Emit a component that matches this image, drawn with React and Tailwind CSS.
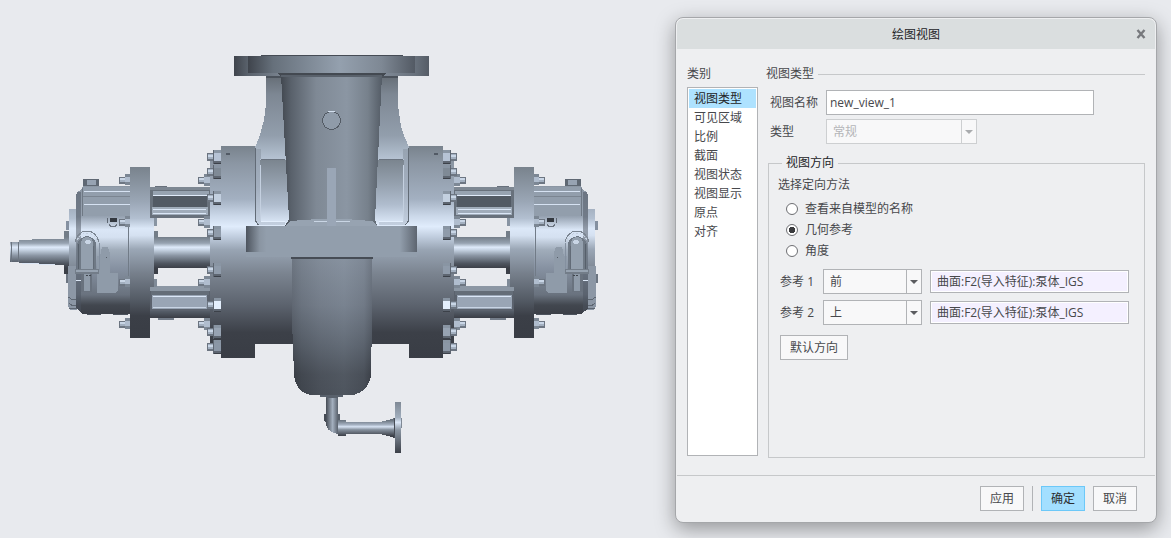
import { useState } from 'react'
import { clsx } from 'clsx'

const categories = ['视图类型', '可见区域', '比例', '截面', '视图状态', '视图显示', '原点', '对齐']
const methods = ['查看来自模型的名称', '几何参考', '角度']

const nuts = [
  { y: 157, fill: '#b6c3d5' },
  { y: 172, fill: '#7f8a96' },
  { y: 198, fill: '#c3d0e0' },
  { y: 233, fill: '#8f9baa' },
  { y: 270, fill: '#8f9baa' },
  { y: 305, fill: '#e4effd' },
  { y: 332, fill: '#97a3b2' },
  { y: 347, fill: '#8b97a6' },
]
const studs = [180, 222, 282, 324]

function Gradient({ id, y1, y2, x1 = 0, x2 = 0, stops }) {
  return (
    <linearGradient id={id} gradientUnits="userSpaceOnUse" x1={x1} x2={x2} y1={y1} y2={y2}>
      {stops.map(([offset, color]) => (
        <stop key={offset} offset={offset} stopColor={color} />
      ))}
    </linearGradient>
  )
}

function Rod({ x, y, width, height = 8 }) {
  return (
    <g>
      <rect x={x} y={y - height / 2} width={width} height={height} fill="#6d7682" />
      <rect x={x} y={y - height / 2 + 1} width={width} height={height - 3} fill="#a3b0c0" />
      <rect x={x} y={y - 2} width={width} height="2" fill="#c9d6e6" />
      <rect x={x} y={y - height / 2} width="1" height={height} fill="#6b7480" />
    </g>
  )
}

function HalfAssembly() {
  return (
    <g>
      {/* arms between the bearing housing and the casing */}
      <rect x="150" y="187" width="60" height="31" fill="#68717c" />
      <rect x="150" y="187" width="60" height="3" fill="#7d8792" />
      <rect x="153" y="191" width="56" height="4" fill="#97a3b1" />
      <rect x="153" y="195" width="54" height="1" fill="#e0ebfa" />
      <rect x="153" y="196" width="54" height="11" fill="#525a64" />
      <rect x="152" y="207" width="56" height="8" fill="#a0acba" />
      <rect x="153" y="209" width="53" height="1" fill="#dbe7f7" />
      <rect x="153" y="213" width="53" height="1" fill="#dbe7f7" />
      <rect x="155" y="186" width="12" height="1" fill="#68717c" />
      <rect x="150" y="286" width="60" height="32" fill="#5b626d" />
      <rect x="150" y="286" width="60" height="5" fill="#8c97a4" />
      <rect x="151" y="291" width="58" height="4" fill="#646d78" />
      <rect x="152" y="295" width="55" height="14" fill="#99a5b5" />
      <rect x="153" y="296" width="53" height="1" fill="#dbe7f7" />
      <rect x="153" y="307" width="53" height="1" fill="#c8d4e4" />
      <rect x="150" y="311" width="60" height="7" fill="url(#arm-foot)" />
      <rect x="158" y="318" width="16" height="2" fill="#757e8a" />
      <rect x="156" y="237" width="54" height="31" fill="url(#shaft)" />
      <rect x="150" y="218" width="4" height="69" fill="url(#thin)" />
      <rect x="154" y="231" width="4" height="43" fill="url(#shaft)" />
      <rect x="154" y="218" width="3" height="8" fill="#8894a2" />
      <rect x="154" y="279" width="3" height="8" fill="#7f8a97" />

      {/* stud ring */}
      {studs.map((y) => (
        <g key={y}>
          <Rod x={198} y={y} width={7} height={7} />
          <rect x="204" y={y - 6} width="7" height="12" fill="#7d8895" />
          <rect x="204" y={y - 3} width="6" height="6" fill="#b0bdce" />
        </g>
      ))}
      <rect x="210" y="161" width="11" height="187" fill="url(#casing)" />
      {nuts.map(({ y, fill }) => (
        <g key={y}>
          <Rod x={207} y={y} width={7} height={8} />
          <rect x="213" y={y - 7} width="8" height="14" fill="#5e6671" />
          <rect x="214" y={y - 7} width="7" height="3" fill="#8995a3" />
          <rect x="214" y={y - 4} width="7" height="8" fill={fill} />
          <rect x="214" y={y + 6} width="7" height="1" fill="#3c4149" />
        </g>
      ))}

      {/* bearing housing */}
      <rect x="83" y="179" width="16" height="7" fill="#5f6873" />
      <rect x="87" y="180" width="9" height="5" fill="#97a3b2" />
      <rect x="87" y="313" width="14" height="2" fill="#4c535d" />
      <rect x="113" y="313" width="15" height="2" fill="#4c535d" />
      <rect x="66" y="221" width="4" height="9" fill="#8490a0" />
      <rect x="66" y="274" width="4" height="9" fill="#6c7581" />
      <rect x="69" y="209" width="8" height="60" fill="url(#thin)" />
      <path d="M68 266h9v44h-7l-2-4z" fill="#8c97a5" />
      <path d="M68.5 297l3 2.5h6M69 303l3 2.5h5M69 308.5h8" fill="none" stroke="#5d6671" />
      <path d="M130 186H83l-2 4-4 2-1 4v112l3 3 4 3h47z" fill="url(#housing)" />
      <path d="M77 192h4v121l-5-6V196z" fill="#4c545f" opacity="0.5" />
      <rect x="83" y="187" width="47" height="29" fill="#929eac" />
      <path d="M84 191.5h46M84 204.5h46" stroke="#d6e2f2" />
      <path d="M83 196.5h47" stroke="#7b8591" />
      <path d="M82.5 188v28" stroke="#6f7985" />
      <path d="M97 293v-37h3l2-9h6l2 6v20h8v17l-2 3z" fill="#8f9ba9" />
      <path d="M128.5 216v72" stroke="#717b87" />
      <path d="M109 224q1 3 4 3t4-3" fill="none" stroke="#6b7480" />
      <path d="M107.5 218v5" stroke="#5e6772" />
      <path d="M110 218h7v4h-7z" fill="#343940" />
      <rect x="106" y="257" width="1" height="1" fill="#555d67" />

      {/* oiler */}
      <path d="M75 242q3-11 12-11 9 0 12 11" fill="none" stroke="#7b8591" />
      <path d="M99 243v27" stroke="#8490a0" />
      <path d="M77 240q4-7 10-7t10 7" fill="none" stroke="#c4d0df" strokeDasharray="2 2" />
      <path d="M77 269V245q1-7 10-9 9 2 9 9v24z" fill="#6f7985" />
      <path d="M81 269V243q1-6 6-6t6 6v26z" fill="#94a0ae" />
      <path d="M78.5 244v25" stroke="#57606b" />
      <path d="M93.5 246v23" stroke="#626b77" />
      <ellipse cx="88" cy="242" rx="3" ry="2" fill="#c9d5e5" />
      <rect x="75" y="269" width="24" height="5" fill="#737d89" />
      <rect x="76" y="270" width="22" height="2" fill="#97a3b1" />
      <rect x="81" y="274" width="11" height="18" fill="#69727e" />
      <rect x="84" y="274" width="6" height="17" fill="#8f9ba9" />
      <path d="M86 275.5h5" stroke="#40464e" strokeDasharray="2 1" />
      <path d="M76 280.5h5" stroke="#dbe6f5" />

      {/* thin flange */}
      {studs.map((y) => (
        <g key={y}>
          <Rod x={119} y={y} width={7} height={7} />
          <rect x="125" y={y - 6} width="5" height="11" fill="#7c8794" />
          <rect x="125" y={y - 3} width="5" height="5" fill="#b0bdce" />
        </g>
      ))}
      <rect x="130" y="167" width="20" height="171" fill="url(#thin)" />

      {/* casing flange */}
      <rect x="221" y="146" width="34" height="212" fill="url(#casing)" />
      <rect x="226" y="153" width="4" height="2" fill="#525a65" />
    </g>
  )
}

function PumpModel() {
  return (
    <svg viewBox="0 0 675 538" className="block h-auto w-full" shapeRendering="crispEdges" role="img" aria-label="泵体">
      <defs>
        <Gradient
          id="casing"
          y1={146}
          y2={358}
          stops={[
            [0, '#79838d'],
            [0.08, '#8b96a3'],
            [0.25, '#a3b0c1'],
            [0.33, '#cbd8e9'],
            [0.38, '#e0ecfc'],
            [0.43, '#bfccdd'],
            [0.49, '#98a4b3'],
            [0.6, '#7b8490'],
            [0.75, '#5c636e'],
            [0.88, '#3c4048'],
            [1, '#393d45'],
          ]}
        />
        <Gradient
          id="thin"
          y1={167}
          y2={338}
          stops={[
            [0, '#79838d'],
            [0.2, '#9aa6b5'],
            [0.3, '#b2bfd0'],
            [0.36, '#dce8f8'],
            [0.4, '#d5e1f1'],
            [0.48, '#9ba7b6'],
            [0.62, '#77808c'],
            [0.78, '#535a64'],
            [0.87, '#3b3f47'],
            [1, '#393d45'],
          ]}
        />
        <Gradient
          id="housing"
          y1={186}
          y2={314}
          stops={[
            [0, '#8b96a3'],
            [0.24, '#97a3b2'],
            [0.34, '#dae6f6'],
            [0.4, '#d5e1f1'],
            [0.5, '#a0acba'],
            [0.65, '#8590a0'],
            [0.85, '#69727e'],
            [0.93, '#42474f'],
            [1, '#3b3f47'],
          ]}
        />
        <Gradient
          id="shaft"
          y1={237}
          y2={268}
          stops={[
            [0, '#737d88'],
            [0.2, '#97a3b1'],
            [0.33, '#dfebfb'],
            [0.42, '#c5d2e2'],
            [0.6, '#8a95a3'],
            [0.85, '#4f5660'],
            [1, '#3b3f47'],
          ]}
        />
        <Gradient id="arm-foot" y1={311} y2={318} stops={[[0, '#565e69'], [1, '#3a3e46']]} />
        <Gradient
          id="top"
          x1={234}
          x2={429}
          y1={0}
          y2={0}
          stops={[
            [0, '#3f444c'],
            [0.07, '#59616b'],
            [0.25, '#7b8591'],
            [0.5, '#95a1af'],
            [0.75, '#828c99'],
            [0.93, '#68717c'],
            [1, '#555c66'],
          ]}
        />
        <Gradient
          id="top-front"
          x1={248}
          x2={415}
          y1={0}
          y2={0}
          stops={[
            [0, '#3f444c'],
            [0.15, '#66707b'],
            [0.55, '#94a0ae'],
            [0.8, '#7e8894'],
            [1, '#535a64'],
          ]}
        />
        <Gradient
          id="neck"
          x1={281}
          x2={382}
          y1={0}
          y2={0}
          stops={[
            [0, '#424850'],
            [0.1, '#59616b'],
            [0.35, '#7f8995'],
            [0.65, '#8b96a3'],
            [0.86, '#77818c'],
            [1, '#545c66'],
          ]}
        />
        <Gradient
          id="shoulder"
          y1={78}
          y2={160}
          stops={[
            [0, '#687079'],
            [0.2, '#7d8793'],
            [0.7, '#929eac'],
            [1, '#b7c4d4'],
          ]}
        />
        <Gradient
          id="recess"
          y1={160}
          y2={224}
          stops={[
            [0, '#7b858f'],
            [0.4, '#97a3b1'],
            [0.7, '#b0bdce'],
            [1, '#dde9f9'],
          ]}
        />
        <Gradient
          id="lip"
          y1={149}
          y2={225}
          stops={[
            [0, '#97a3b1'],
            [0.5, '#a3afbf'],
            [1, '#c3cfdf'],
          ]}
        />
        <Gradient
          id="block"
          x1={246}
          x2={417}
          y1={0}
          y2={0}
          stops={[
            [0, '#4d545e'],
            [0.08, '#8a95a2'],
            [0.12, '#929eac'],
            [0.9, '#929eac'],
            [1, '#5d6570'],
          ]}
        />
        <Gradient
          id="bowl"
          x1={292}
          x2={372}
          y1={0}
          y2={0}
          stops={[
            [0, '#3f444c'],
            [0.12, '#59616b'],
            [0.35, '#717a86'],
            [0.65, '#7f8a97'],
            [0.9, '#6a737f'],
            [1, '#454b54'],
          ]}
        />
        <Gradient
          id="bowl-shade"
          y1={257}
          y2={395}
          stops={[
            [0, '#8d98a6'],
            [0.35, '#757e8b'],
            [0.65, '#4f5660'],
            [0.85, '#33373e'],
            [1, '#2e3239'],
          ]}
        />
        <Gradient
          id="pipe"
          x1={326}
          x2={338}
          y1={0}
          y2={0}
          stops={[
            [0, '#454b54'],
            [0.55, '#a4b0bf'],
            [1, '#59616c'],
          ]}
        />
        <Gradient
          id="drain"
          y1={420}
          y2={436}
          stops={[
            [0, '#66707b'],
            [0.3, '#a6b2c2'],
            [0.42, '#d6e2f2'],
            [0.6, '#87929f'],
            [1, '#3b3f47'],
          ]}
        />
        <Gradient
          id="drain-flange"
          y1={402}
          y2={453}
          stops={[
            [0, '#7f8995'],
            [0.3, '#a0adbc'],
            [0.4, '#dbe7f7'],
            [0.55, '#8a95a2'],
            [1, '#3b3f47'],
          ]}
        />
      </defs>

      {/* input shaft */}
      <path d="M10 242h9v-2l26-1h19v26l-45-2v-1h-9z" fill="url(#shaft)" />
      <path d="M11.5 242v20M18.5 242v20" stroke="#6b7480" />
      <path d="M22 263.5l33 1" stroke="#dbe6f5" />
      <rect x="64" y="231" width="5" height="43" fill="url(#shaft)" />

      <HalfAssembly />
      <g transform="translate(664 0) scale(-1 1)">
        <HalfAssembly />
      </g>

      {/* casing body */}
      <rect x="255" y="147" width="154" height="197" fill="url(#casing)" />
      <rect x="255" y="130" width="154" height="17" fill="#e8eaee" />
      <path d="M266 76h132v30l3 20 4 12 4 9v13H255v-13l4-9 5-18 2-16z" fill="url(#shoulder)" />
      <path d="M266 77h132" stroke="#4b525b" strokeWidth="2" />
      <rect x="255" y="160" width="154" height="64" fill="url(#recess)" />
      <path d="M256 149h5v10h-1v62h25v4h-26l-3-4zM408 149h-5v10h1v62h-25v4h26l3-4z" fill="url(#lip)" />
      <path d="M255.5 148v73l3 4M408.5 148v73l-3 4" fill="none" stroke="#626b76" />
      <path d="M260.5 165v56M403.5 165v56" stroke="#c4d0e0" />
      <path d="M261 159.5h24M379 159.5h24" stroke="#6b7480" />
      <path d="M261 221.5h24M379 221.5h24" stroke="#e4effd" />

      {/* discharge nozzle */}
      <rect x="261" y="55" width="142" height="2" fill="#464c55" />
      <rect x="234" y="56" width="195" height="20" fill="url(#top)" />
      <rect x="248" y="56" width="167" height="17" fill="url(#top-front)" />
      <path d="M277 73h109l-3 3H280z" fill="#434951" />
      <path d="M281 75h101l-7 144 2 7h-92l4-7z" fill="url(#neck)" />
      <path d="M281 76h101" stroke="#59616b" strokeWidth="2" />
      <path d="M285 226l5-5q42-4 82 0l5 5z" fill="#97a3b1" />
      <path d="M314 221.5h36" stroke="#c9d5e4" />
      <circle cx="331.5" cy="120.5" r="9" fill="#8f9ba9" stroke="#535b65" />
      <path d="M328 111.5h7" fill="none" stroke="#d3dfee" />
      <rect x="327" y="168" width="9" height="58" fill="#9aa6b6" />

      {/* volute */}
      <path d="M292 257h80v63l-1 55q-2 16-18 20h-41q-16-2-18-20l-2-55z" fill="url(#bowl-shade)" />
      <path
        d="M292 257h80v63l-1 55q-2 16-18 20h-41q-16-2-18-20l-2-55z"
        fill="url(#bowl)"
        opacity="0.4"
      />
      <path d="M291 258h82" stroke="#464c55" strokeWidth="2" />
      <rect x="246" y="226" width="171" height="31" fill="#929eac" />
      <rect x="246" y="226" width="171" height="26" fill="url(#block)" />

      {/* drain line */}
      <path d="M320 395h23v2h-5v2h-12v-2h-6z" fill="#59616c" />
      <rect x="326" y="398" width="12" height="17" fill="url(#pipe)" />
      <path d="M325 420h13v14h-1q-11-2-12-14z" fill="url(#pipe)" />
      <rect x="324" y="414" width="16" height="7" fill="url(#pipe)" />
      <rect x="346" y="422" width="35" height="12" fill="url(#drain)" />
      <rect x="338" y="420" width="8" height="16" fill="url(#drain)" />
      <path d="M380 422l8-2 7-2v20l-7-2-8-2z" fill="url(#drain)" />
      <path d="M394.5 418v20" stroke="#464c55" />
      <rect x="395" y="402" width="6" height="51" fill="url(#drain-flange)" />
      <rect x="401" y="418" width="1" height="10" fill="#7f8995" />
    </svg>
  )
}

function Combo({ id, label, value, options, disabled, className }) {
  return (
    <div className={clsx('relative', className)}>
      <select
        id={id}
        aria-label={label}
        defaultValue={value}
        disabled={disabled}
        className={clsx(
          'block h-[25px] w-full appearance-none rounded-none border bg-[#f8f8f9] pl-[6px] pr-5 outline-none',
          disabled ? 'border-[#cdcfd1] text-[#b4b5b8] opacity-100' : 'border-[#b1b3b6] text-[#47484c]',
        )}
      >
        {options.map((option) => (
          <option key={option}>{option}</option>
        ))}
      </select>
      <span
        className={clsx(
          'pointer-events-none absolute inset-y-0 right-0 flex w-4 items-center justify-center border-l pr-px',
          disabled ? 'border-[#cdcfd1] text-[#a9abae]' : 'border-[#b1b3b6] text-[#5b5c60]',
        )}
      >
        <svg viewBox="0 0 8 4" className="h-1 w-2" fill="currentColor">
          <path d="M0 0h8L4 4z" />
        </svg>
      </span>
    </div>
  )
}

function ReferenceRow({ index, direction }) {
  const id = `reference-${index}`

  return (
    <div className="flex items-center">
      <label htmlFor={id} className="w-[43px]">
        参考 {index}
      </label>
      <Combo id={id} value={direction} options={['前', '后', '上', '下', '左', '右']} className="w-[99px]" />
      <input
        type="text"
        readOnly
        aria-label={`参考 ${index} 几何`}
        defaultValue="曲面:F2(导入特征):泵体_IGS"
        className="ml-2 h-[23px] min-w-0 flex-1 border border-[#b1b3b6] bg-[#f4f0ff] px-[6px] pb-[2px] shadow-[inset_0_0_0_1px_#ffffff] outline-none"
      />
    </div>
  )
}

function DialogButton({ primary, className, children }) {
  return (
    <button
      type="button"
      className={clsx(
        'h-[25px] border',
        primary ? 'border-[#6cc8f8] bg-[#a3dfff] text-[#2c2d30]' : 'border-[#b1b3b6] bg-[#f8f8f9]',
        className,
      )}
    >
      {children}
    </button>
  )
}

function ViewDialog() {
  const [category, setCategory] = useState(categories[0])
  const [method, setMethod] = useState('几何参考')

  return (
    <section
      role="dialog"
      aria-label="绘图视图"
      className="flex w-[482px] shrink-0 flex-col overflow-hidden rounded-lg border border-[#a5a7aa] bg-[#eeeff1] p-px shadow-[0_6px_20px_rgba(0,0,0,0.36)]"
    >
      <header className="grid h-[30px] grid-cols-[1fr_auto_1fr] items-center rounded-t-md bg-[#dadedf] px-[9px] text-[#232427]">
        <span />
        <h1 className="pt-px">绘图视图</h1>
        <button type="button" aria-label="关闭" className="justify-self-end text-[#77797d]">
          <svg viewBox="0 0 10 10" className="size-[10px]" fill="none" stroke="currentColor" strokeWidth="2.4">
            <path d="M1.5 1l7 8M8.5 1l-7 8" />
          </svg>
        </button>
      </header>

      <div className="flex flex-1 gap-2 pt-4 pr-[10px] pb-[17px] pl-[10px]">
        <div className="flex w-[71px] shrink-0 flex-col pb-[2px]">
          <h2 className="h-[22px] leading-[18px]">类别</h2>
          <ul className="flex-1 border border-[#b1b3b6] bg-white p-px">
            {categories.map((name) => (
              <li key={name}>
                <button
                  type="button"
                  onClick={() => setCategory(name)}
                  className={clsx(
                    'block h-[19px] w-full pl-[5px] text-left leading-[19px]',
                    name === category && 'bg-[#aee2ff] text-[#232427]',
                  )}
                >
                  {name}
                </button>
              </li>
            ))}
          </ul>
        </div>

        <div className="flex min-w-0 flex-1 flex-col">
          <div className="flex h-[18px] items-center gap-1">
            <h2>视图类型</h2>
            <span className="h-px flex-1 bg-[#c6c8ca]" />
          </div>

          <div className="mt-[7px] ml-1 grid grid-cols-[56px_1fr] items-center gap-y-1">
            <label htmlFor="view-name">视图名称</label>
            <input
              id="view-name"
              type="text"
              defaultValue="new_view_1"
              className="mr-[51px] h-[25px] border border-[#b1b3b6] bg-white px-[3px] outline-none"
            />
            <label htmlFor="view-type">类型</label>
            <Combo id="view-type" value="常规" options={['常规']} disabled className="w-[151px]" />
          </div>

          <fieldset className="mt-[10px] ml-[2px] flex-1 border border-[#c6c8ca] px-[9px] pb-2">
            <legend className="ml-1 px-1 leading-[18px] text-[#232427]">视图方向</legend>
            <p className="mt-1 leading-[18px]">选择定向方法</p>
            <div className="mt-1 ml-2">
              {methods.map((name) => (
                <label key={name} className="flex h-[21px] items-center gap-[7px]">
                  <input
                    type="radio"
                    name="method"
                    checked={method === name}
                    onChange={() => setMethod(name)}
                    className="size-3 appearance-none rounded-full border border-[#6f7074] bg-white bg-clip-padding checked:bg-[radial-gradient(circle,#3a3b3e_3px,#ffffff_3.5px)]"
                  />
                  {name}
                </label>
              ))}
            </div>
            <div className="mt-2 mr-[6px] ml-[2px] flex flex-col items-stretch gap-[6px]">
              <ReferenceRow index={1} direction="前" />
              <ReferenceRow index={2} direction="上" />
            </div>
            <DialogButton className="mt-[10px] ml-[2px] w-[68px]">默认方向</DialogButton>
          </fieldset>
        </div>
      </div>

      <footer className="flex justify-end gap-2 border-t border-[#c6c8ca] pt-[10px] pr-[18px] pb-[10px]">
        <DialogButton className="w-11">应用</DialogButton>
        <span className="w-px bg-[#b1b3b6]" />
        <DialogButton primary className="w-11">
          确定
        </DialogButton>
        <DialogButton className="w-11">取消</DialogButton>
      </footer>
    </section>
  )
}

export default function App() {
  return (
    <main className="flex min-h-screen bg-[#e8eaee] font-['Open_Sans','Noto_Sans_CJK_SC',sans-serif] text-[12px] leading-[18px] text-[#47484c]">
      <div className="min-w-0 flex-1">
        <PumpModel />
      </div>
      <div className="flex pt-[17px] pr-[14px] pb-[15px]">
        <ViewDialog />
      </div>
    </main>
  )
}
